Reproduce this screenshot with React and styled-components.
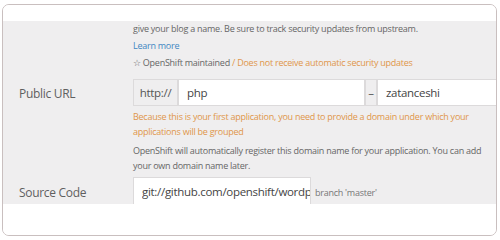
import React from "react";
import styled, { createGlobalStyle } from "styled-components";

const Global = createGlobalStyle`
  html, body { margin: 0; padding: 0; background: #fff; }
  body { font-family: "Open Sans", "Liberation Sans", sans-serif; }
`;

const Card = styled.div`
  margin: 4px 3px 0 2px;
  height: 232px;
  box-sizing: border-box;
  border: 1px solid #c9bfbf;
  border-radius: 7px;
  overflow: hidden;
  display: flex;
  flex-direction: column;
  background: #fff;
`;

const TopBar = styled.div`
  height: 16px;
  flex: none;
  background: #fff;
`;

const Body = styled.div`
  background: #efeeef;
  height: 183px;
  flex: none;
  overflow: hidden;
  display: flex;
  flex-direction: column;
`;

const Row = styled.div`
  display: grid;
  grid-template-columns: 130px 355px;
  align-items: start;
  margin-top: ${(p) => p.$mt || 0}px;
`;

const Label = styled.div`
  padding-left: 16px;
  padding-top: ${(p) => p.$pt || 0}px;
  font-size: 12px;
  letter-spacing: -0.3px;
  color: #5f5f5f;
  line-height: 27px;
`;

const Help = styled.div`
  font-size: 9px;
  letter-spacing: -0.25px;
  line-height: 15px;
  color: ${(p) => (p.$warn ? "#e0964a" : "#666")};
  margin-top: ${(p) => p.$mt || 0}px;
`;

const LinkText = styled.a`
  color: #3f87c2;
  text-decoration: none;
`;

const Warn = styled.span`
  color: #e0964a;
`;

const InputGroup = styled.div`
  display: flex;
  height: 27px;
  width: ${(p) => (p.$wide ? "380px" : "auto")};
`;

const Addon = styled.div`
  box-sizing: border-box;
  border: 1px solid #dcdadb;
  background: #efeeef;
  color: #555;
  font-size: 11.5px;
  letter-spacing: -0.3px;
  display: flex;
  align-items: center;
  justify-content: center;
  width: ${(p) => p.$w}px;
  flex: none;
  & + & { border-left: none; }
`;

const Input = styled.input`
  box-sizing: border-box;
  background: #fff;
  border: 1px solid #dcdadb;
  border-radius: 0;
  outline: none;
  margin: 0;
  color: #444;
  font-family: "Open Sans", "Liberation Sans", sans-serif;
  font-size: 11.5px;
  letter-spacing: -0.3px;
  padding: 0 0 0 8px;
  height: 100%;
  width: ${(p) => (p.$w ? `${p.$w}px` : "auto")};
  min-width: 0;
  flex: ${(p) => (p.$grow ? "1" : "none")};
`;

const SourceInput = styled(Input)`
  height: 30px;
  border-bottom: none;
  padding-bottom: 3px;
`;

const Branch = styled.span`
  font-size: 9px;
  letter-spacing: -0.25px;
  color: #777;
  align-self: center;
  margin-left: 4px;
  padding-top: 3px;
`;

const Footer = styled.div`
  flex: 1;
  background: #fff;
`;

export default function App() {
  return (
    <>
      <Global />
      <Card>
        <TopBar />
        <Body>
          <Row>
            <div />
            <div>
              <Help>
                give your blog a name. Be sure to track security updates from upstream.
              </Help>
              <Help $mt={2}>
                <LinkText href="#">Learn more</LinkText>
              </Help>
              <Help $mt={2}>
                ☆ OpenShift maintained <Warn>/ Does not receive automatic security updates</Warn>
              </Help>
            </div>
          </Row>
          <Row $mt={9}>
            <Label $pt={1}>Public URL</Label>
            <div>
              <InputGroup $wide>
                <Addon $w={45}>http://</Addon>
                <Input $w={187} defaultValue="php" readOnly />
                <Addon $w={12}>–</Addon>
                <Input $grow defaultValue="zatanceshi" readOnly />
              </InputGroup>
              <Help $warn $mt={3}>
                Because this is your first application, you need to provide a domain under which your applications will be grouped
              </Help>
              <Help $mt={4}>
                OpenShift will automatically register this domain name for your application. You can add your own domain name later.
              </Help>
            </div>
          </Row>
          <Row $mt={4}>
            <Label $pt={2}>Source Code</Label>
            <InputGroup>
              <SourceInput
                $w={178}
                defaultValue="git://github.com/openshift/wordpress-example"
                readOnly
              />
              <Branch>branch 'master'</Branch>
            </InputGroup>
          </Row>
        </Body>
        <Footer />
      </Card>
    </>
  );
}
